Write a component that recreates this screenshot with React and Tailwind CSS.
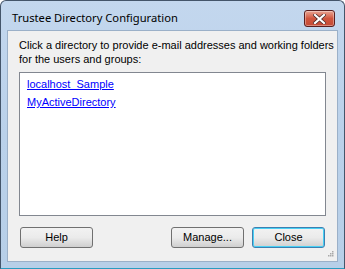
export default function App() {
  const btn =
    "h-[21px] w-[73px] rounded-[3px] border border-[#707070] bg-gradient-to-b from-[#f2f2f2] via-[#ebebeb] to-[#cfcfcf] text-[11px] text-black flex items-center justify-center";
  return (
    <div className="w-[345px] h-[269px] bg-white">
      <div
        className="w-[345px] h-[269px] rounded-t-[6px] border border-[#44556a] border-b-[#2a9cc0] bg-gradient-to-b from-[#c3d7ee] via-[#bad1ea] to-[#b7cfe8] flex flex-col"
        style={{ fontFamily: '"Liberation Sans", Arial, sans-serif' }}
      >
        <div className="h-[29px] flex items-start justify-between pl-[11px] pr-[9px]">
          <div
            className="text-[11.2px] text-black mt-[10px] leading-[14px]"
            style={{ fontFamily: '"Noto Sans", sans-serif' }}
          >
            Trustee Directory Configuration
          </div>
          <div className="mt-[9px] w-[31px] h-[17px] rounded-[3px] border border-[#5a1f1f] bg-gradient-to-b from-[#e8a493] via-[#d0553e] to-[#c44a35] flex items-center justify-center shadow-[inset_0_0_0_1px_rgba(255,255,255,0.35)]">
            <svg width="13" height="10" viewBox="0 0 13 10">
              <path
                d="M2 1 L11 9 M11 1 L2 9"
                stroke="#4a2a2a"
                strokeWidth="3.6"
                strokeLinecap="square"
              />
              <path
                d="M2 1 L11 9 M11 1 L2 9"
                stroke="#ffffff"
                strokeWidth="2.2"
                strokeLinecap="square"
              />
            </svg>
          </div>
        </div>
        <div className="mx-[6px] mb-[6px] flex-1 border border-[#9bb0c8] bg-[#f0f0f0] flex flex-col relative">
          <div className="pl-[11px] pt-[7px] text-[11px] leading-[14px] text-black">
            Click a directory to provide e-mail addresses and working folders
            <br />
            for the users and groups:
          </div>
          <div className="mt-[6px] ml-[11px] mr-[11px] h-[144px] border border-[#828790] bg-white flex flex-col pl-[7px] pt-[4px] gap-[4px]">
            <a className="text-[11px] leading-[14px] text-[#0000ff] underline w-fit cursor-pointer">
              localhost_Sample
            </a>
            <a className="text-[11px] leading-[14px] text-[#0000ff] underline w-fit cursor-pointer">
              MyActiveDirectory
            </a>
          </div>
          <div className="mt-[11px] ml-[12px] mr-[12px] flex items-center">
            <button className={btn}>Help</button>
            <div className="flex-1" />
            <button className={btn}>Manage...</button>
            <button
              className={
                btn +
                " ml-[8px] !border-[#3c7fb1] shadow-[inset_0_0_0_1px_#48d0f4]"
              }
            >
              Close
            </button>
          </div>
          <svg
            className="absolute right-[3px] bottom-[3px]"
            width="7"
            height="7"
            viewBox="0 0 7 7"
          >
            {[
              [5, 0],
              [3, 2],
              [5, 2],
              [1, 4],
              [3, 4],
              [5, 4],
            ].map(([x, y], i) => (
              <rect key={i} x={x} y={y} width="1.5" height="1.5" fill="#a9a9a9" />
            ))}
          </svg>
        </div>
      </div>
    </div>
  );
}
